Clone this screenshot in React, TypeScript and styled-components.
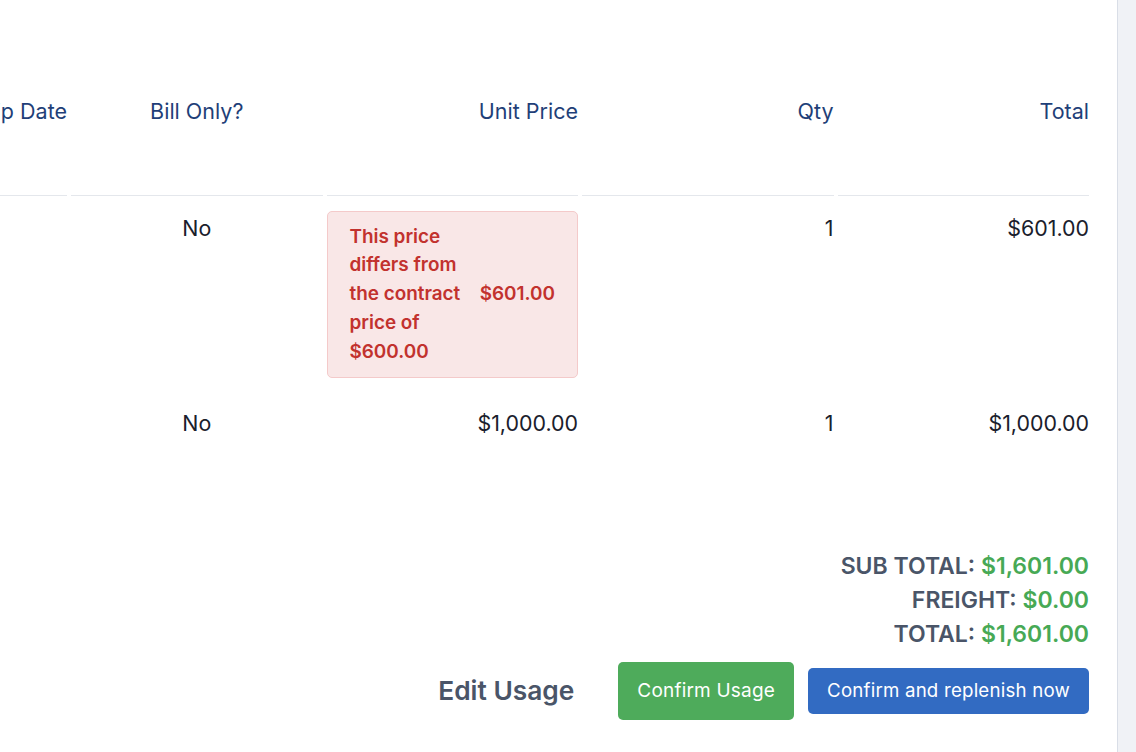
import React from "react";
import styled, { createGlobalStyle } from "styled-components";

const Global = createGlobalStyle`
  html, body { margin: 0; padding: 0; background: #f0f2f6; }
  body { font-family: Inter, "Noto Sans", "Liberation Sans", sans-serif; color: #1a202c; }
  * { box-sizing: border-box; }
`;

const Page = styled.div`
  display: flex;
  width: 1136px;
  height: 752px;
  overflow: hidden;
`;

const Panel = styled.main`
  width: 1118px;
  flex: none;
  background: #ffffff;
  border-right: 1px solid #d9dee7;
  padding: 0 28px 0 0;
  display: flex;
  flex-direction: column;
`;

const Side = styled.aside`
  flex: 1;
  background: #f0f2f6;
`;

const Table = styled.div`
  display: grid;
  grid-template-columns: 67px repeat(4, minmax(0, 1fr));
  column-gap: 4px;
`;

type Align = "left" | "center" | "right";
const justify = (a: Align) => (a === "left" ? "flex-start" : a === "center" ? "center" : "flex-end");

const HeadCell = styled.div<{ $align: Align }>`
  height: 196px;
  border-bottom: 1px solid #e4e7ec;
  display: flex;
  justify-content: ${(p) => justify(p.$align)};
  align-items: flex-start;
  padding-top: 96px;
  font-size: 21.5px;
  line-height: 30px;
  color: #1f3f78;
  white-space: nowrap;
`;

const Cell = styled.div<{ $align: Align }>`
  display: flex;
  justify-content: ${(p) => justify(p.$align)};
  align-items: flex-start;
  padding: 15px 0 13px;
  font-size: 21.4px;
  line-height: 34px;
  color: #1a202c;
  white-space: nowrap;
  min-width: 0;
`;

const PriceWarning = styled.div`
  flex: 1;
  min-width: 0;
  display: flex;
  align-items: center;
  gap: 18px;
  padding: 10.5px 22px;
  background: #f9e7e7;
  border: 1px solid #f4caca;
  border-radius: 5px;
  color: #c2322e;
  font-size: 18.9px;
  font-weight: 600;
  line-height: 28.8px;
  white-space: normal;
`;

const WarningText = styled.span`
  flex: 1;
  min-width: 0;
`;

const WarningPrice = styled.span`
  flex: none;
  white-space: nowrap;
`;

const Footer = styled.div`
  display: flex;
  flex-direction: column;
  align-items: flex-end;
  margin-top: 96px;
`;

const SummaryLine = styled.div`
  font-size: 23px;
  font-weight: 600;
  line-height: 34px;
  color: #4a5568;
`;

const Money = styled.span`
  color: #47a955;
`;

const Actions = styled.div`
  display: flex;
  align-items: center;
  gap: 14px;
  margin-top: 11px;
`;

const LinkButton = styled.button`
  font-family: inherit;
  background: none;
  border: none;
  padding: 0 30px 0 0;
  font-size: 26.3px;
  font-weight: 600;
  color: #4a5568;
  cursor: pointer;
`;

const ActionButton = styled.button<{ $tone: "green" | "blue" }>`
  font-family: inherit;
  border: none;
  border-radius: 5px;
  color: #ffffff;
  font-size: ${(p) => (p.$tone === "green" ? "19px" : "18.7px")};
  letter-spacing: 0.2px;
  padding: 0 19px;
  height: ${(p) => (p.$tone === "green" ? "58px" : "46px")};
  background: ${(p) => (p.$tone === "green" ? "#4eab5b" : "#326bc2")};
  cursor: pointer;
`;

export default function App() {
  return (
    <>
      <Global />
      <Page>
        <Panel>
          <Table>
            <HeadCell $align="right">Ship Date</HeadCell>
            <HeadCell $align="center">Bill Only?</HeadCell>
            <HeadCell $align="right">Unit Price</HeadCell>
            <HeadCell $align="right">Qty</HeadCell>
            <HeadCell $align="right">Total</HeadCell>

            <Cell $align="right" />
            <Cell $align="center">No</Cell>
            <Cell $align="right">
              <PriceWarning>
                <WarningText>This price differs from the contract price of $600.00</WarningText>
                <WarningPrice>$601.00</WarningPrice>
              </PriceWarning>
            </Cell>
            <Cell $align="right">1</Cell>
            <Cell $align="right">$601.00</Cell>

            <Cell $align="right" />
            <Cell $align="center">No</Cell>
            <Cell $align="right">$1,000.00</Cell>
            <Cell $align="right">1</Cell>
            <Cell $align="right">$1,000.00</Cell>
          </Table>

          <Footer>
            <SummaryLine>
              SUB TOTAL: <Money>$1,601.00</Money>
            </SummaryLine>
            <SummaryLine>
              FREIGHT: <Money>$0.00</Money>
            </SummaryLine>
            <SummaryLine>
              TOTAL: <Money>$1,601.00</Money>
            </SummaryLine>
            <Actions>
              <LinkButton>Edit Usage</LinkButton>
              <ActionButton $tone="green">Confirm Usage</ActionButton>
              <ActionButton $tone="blue">Confirm and replenish now</ActionButton>
            </Actions>
          </Footer>
        </Panel>
        <Side />
      </Page>
    </>
  );
}
